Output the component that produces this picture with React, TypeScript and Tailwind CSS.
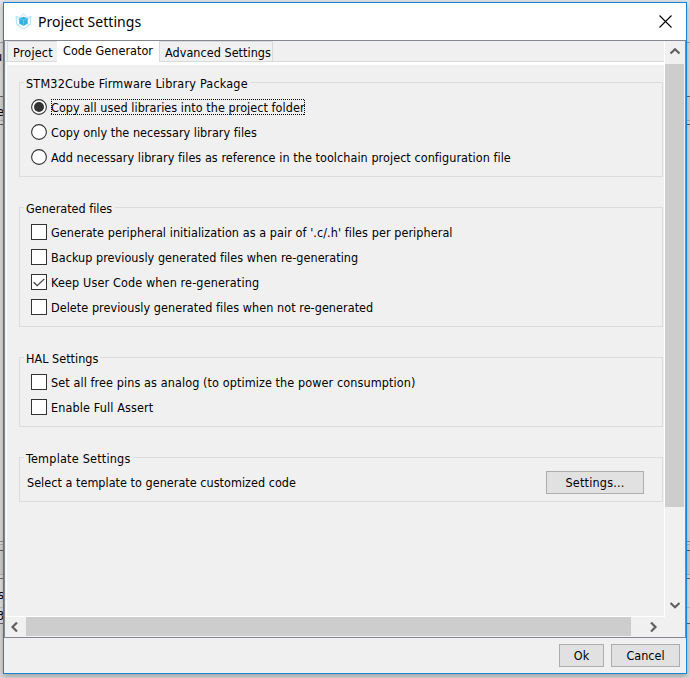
import React from "react";

const ui = "font-['DejaVu_Sans_Condensed','DejaVu_Sans',sans-serif] [font-stretch:condensed] [font-variant-ligatures:none]";

// Horizontal bands of the application window that sits behind the dialog.
const bands = [
  "h-[42px] bg-[#e4e4e4]",
  "h-px bg-[#a0a0a0]",
  "h-[53px] bg-[#dedede]",
  "h-px bg-[#696969]",
  "h-[23px] bg-[#d6d6d6]",
  "h-px bg-[#b4b4b4]",
  "h-[3px] bg-[#dedede]",
  "h-px bg-[#5a5a5a]",
  "h-[416px] bg-[#dcdcdc]",
  "h-px bg-[#909090]",
  "h-[2px] bg-[#dedede]",
  "h-px bg-[#b8b8b8]",
  "h-[5px] bg-[#d6d6d6]",
  "h-px bg-[#5a5a5a]",
  "h-[23px] bg-[#d2d2d2]",
  "h-px bg-[#b4b4b4]",
  "h-[3px] bg-[#dedede]",
  "h-px bg-[#696969]",
  "h-[28px] bg-[#e2e2e2]",
  "h-px bg-[#c4c4c4]",
  "h-[15px] bg-[#e2e2e2]",
  "h-px bg-[#696969]",
  "h-[54px] bg-[#dadada]",
];

function Backdrop() {
  return (
    <div className="flex flex-col">
      {bands.map((band, i) => (
        <div key={i} className={`shrink-0 ${band}`} />
      ))}
    </div>
  );
}

function Group({ title, track, className, children }: { title: string; track: string; className: string; children: React.ReactNode }) {
  return (
    <section className={`relative w-[644px] border border-[#dcdcdc] ${className}`}>
      <h2 className={`absolute -top-[7px] left-[4px] h-4 whitespace-nowrap bg-[#f0f0f0] px-0.5 leading-4 ${track}`}>{title}</h2>
      {children}
    </section>
  );
}

function Check({ label, checked = false, track }: { label: string; checked?: boolean; track: string }) {
  return (
    <label className="flex h-[25px] items-start pt-[5px]">
      <span className="flex h-4 w-4 items-center justify-center border border-[#333] bg-white">
        {checked && (
          <svg width="14" height="14" viewBox="0 0 14 14" fill="none" stroke="#404040" strokeWidth="1.3">
            <path d="M1.6 7.2 5.2 10.7 12.4 3.9" />
          </svg>
        )}
      </span>
      <span className={`ml-1 mt-px whitespace-nowrap leading-4 ${track}`}>{label}</span>
    </label>
  );
}

function Radio({ label, selected = false, track }: { label: string; selected?: boolean; track: string }) {
  return (
    <label className="flex h-[25px] items-start pt-[5px]">
      <svg width="16" height="16" viewBox="0 0 16 16">
        <circle cx="8" cy="8" r="7.4" fill="#fff" stroke="#333" strokeWidth="1.1" />
        {selected && <circle cx="8" cy="8" r="5" fill="#333" />}
      </svg>
      <span className={`relative ml-1 mt-px whitespace-nowrap leading-4 ${track}`}>
        {label}
        {selected && (
          <svg className="absolute -top-px left-0" width="254" height="16" shapeRendering="crispEdges" stroke="#000" strokeDasharray="1 1">
            <path d="M0 .5H254M0 15.5H254M.5 0V16M253.5 1V16" />
          </svg>
        )}
      </span>
    </label>
  );
}

function Chevron({ d, className = "" }: { d: string; className?: string }) {
  return (
    <svg className={`shrink-0 ${className}`} width="10" height="10" viewBox="0 0 10 10" fill="none" stroke="#606060" strokeWidth="2.2">
      <path d={d} />
    </svg>
  );
}

export default function App() {
  return (
    <div className={`relative h-[678px] w-[690px] overflow-hidden bg-[#dadada] text-[12.5px] text-black ${ui}`}>
      <Backdrop />
      <span className="absolute -left-[5px] top-[49px] leading-4">u</span>
      <span className="absolute -left-[3px] top-[104px] leading-4">e</span>
      <span className="absolute -left-[2px] top-[587px] leading-4">s</span>
      <span className="absolute -left-[3px] top-[608px] leading-4">3</span>
      <main className="absolute left-[3px] top-[2px] flex h-[672px] w-[684px] flex-col border border-[#1883d7] bg-[#f0f0f0] shadow-[0_2px_6px_rgba(0,0,0,0.3)]">
        <header className="flex h-[37px] shrink-0 items-center bg-white pl-[11px] pr-[14px]">
          <svg width="17" height="17" viewBox="0 0 17 17" fill="none">
            <path d="M1 3.5 5 4.5 8.5 .8 12 4.5 16 3.5 15.2 11.5 8.5 16 1.8 11.5Z M1 3.5 4 7 M16 3.5 13 7 M1.8 11.5 5 11 M15.2 11.5 12 11" stroke="#b5e2f2" strokeWidth="1" />
            <path d="M4.2 5.2 8.5 3.8 12.8 5.2V10.6L8.5 13 4.2 10.6Z" fill="#35b1e1" />
            <path d="M4.6 5.7 8.5 7 12.4 5.7M8.5 7V12.6" stroke="#8bd5f0" strokeWidth=".6" />
          </svg>
          <h1 className="ml-[6px] font-['Noto_Sans',sans-serif] text-[14px] font-normal leading-5 tracking-[0.03px]">Project Settings</h1>
          <svg className="ml-auto" width="13" height="13" viewBox="0 0 13 13" stroke="#000" strokeWidth="1.1">
            <path d="M.5 .5 12.5 12.5M12.5 .5 .5 12.5" />
          </svg>
        </header>
        <div className="flex h-[598px] shrink-0 flex-col border border-[#828790]">
          <div className="flex h-[576px] shrink-0">
            <div className="flex w-[660px] shrink-0 flex-col border-r border-white">
              <nav className="flex h-[21px] shrink-0 items-start border-b border-[#d9d9d9] pl-[2px]">
                <span className="h-[21px] w-[50px] border-l border-t border-[#d9d9d9] pl-[5px] pt-[3px] leading-4 tracking-[0.2px]">Project</span>
                <span className="z-10 h-[22px] w-[102px] bg-white pl-[6px] pt-[2px] leading-4 tracking-[0.04px]">Code Generator</span>
                <span className="h-[21px] w-[114px] whitespace-nowrap border-x border-t border-[#d9d9d9] pl-[5px] pt-[3px] leading-4 tracking-[0.04px]">Advanced Settings</span>
              </nav>
              <div className="ml-px flex-1 border-b border-l border-t-[3px] border-white pl-[12px] pt-[17px]">
                <Group title="STM32Cube Firmware Library Package" track="tracking-[0.2px]" className="h-[95px] pl-[11px] pt-[11px]">
                  <Radio selected track="tracking-[0.06px]" label="Copy all used libraries into the project folder" />
                  <Radio track="tracking-[0.03px]" label="Copy only the necessary library files" />
                  <Radio track="tracking-[0.06px]" label="Add necessary library files as reference in the toolchain project configuration file" />
                </Group>
                <Group title="Generated files" track="tracking-[0px]" className="mt-[30px] h-[120px] pl-[11px] pt-[11px]">
                  <Check track="tracking-[0.07px]" label="Generate peripheral initialization as a pair of '.c/.h' files per peripheral" />
                  <Check track="tracking-[0.04px]" label="Backup previously generated files when re-generating" />
                  <Check checked track="tracking-[0.14px]" label="Keep User Code when re-generating" />
                  <Check track="tracking-[0.05px]" label="Delete previously generated files when not re-generated" />
                </Group>
                <Group title="HAL Settings" track="tracking-[0.02px]" className="mt-[30px] h-[70px] pl-[11px] pt-[11px]">
                  <Check track="tracking-[0.1px]" label="Set all free pins as analog (to optimize the power consumption)" />
                  <Check track="tracking-[0.13px]" label="Enable Full Assert" />
                </Group>
                <Group title="Template Settings" track="tracking-[0.22px]" className="mt-[30px] flex h-[45px] justify-between pl-[7px] pr-[18px] pt-[13px]">
                  <span className="pt-[4px] leading-4 tracking-[0.03px]">Select a template to generate customized code</span>
                  <button className="h-[23px] w-[98px] border border-[#adadad] bg-[#e1e1e1] pt-px leading-4 tracking-[0.2px]">Settings...</button>
                </Group>
              </div>
            </div>
            <div className="flex w-[19px] flex-col items-center">
              <Chevron className="mt-[5px]" d="M.5 7.5 5 3.2 9.5 7.5" />
              <div className="mt-[8px] h-[443px] w-[19px] shrink-0 bg-[#cdcdcd]" />
              <Chevron className="mb-[7px] mt-auto" d="M.5 3 5 7.3 9.5 3" />
            </div>
          </div>
          <div className="flex h-[19px] items-center">
            <Chevron className="ml-[5px]" d="M7 .5 2.5 5 7 9.5" />
            <div className="ml-[6px] h-[19px] w-[605px] bg-[#cdcdcd]" />
            <Chevron className="ml-[17px]" d="M3 .5 7.5 5 3 9.5" />
          </div>
        </div>
        <footer className="flex gap-[7px] pl-[555px] pt-[6px]">
          <button className="h-[23px] w-[45px] border border-[#adadad] bg-[#e1e1e1] pt-px leading-4">Ok</button>
          <button className="h-[23px] w-[69px] border border-[#adadad] bg-[#e1e1e1] pt-px leading-4">Cancel</button>
        </footer>
      </main>
    </div>
  );
}
